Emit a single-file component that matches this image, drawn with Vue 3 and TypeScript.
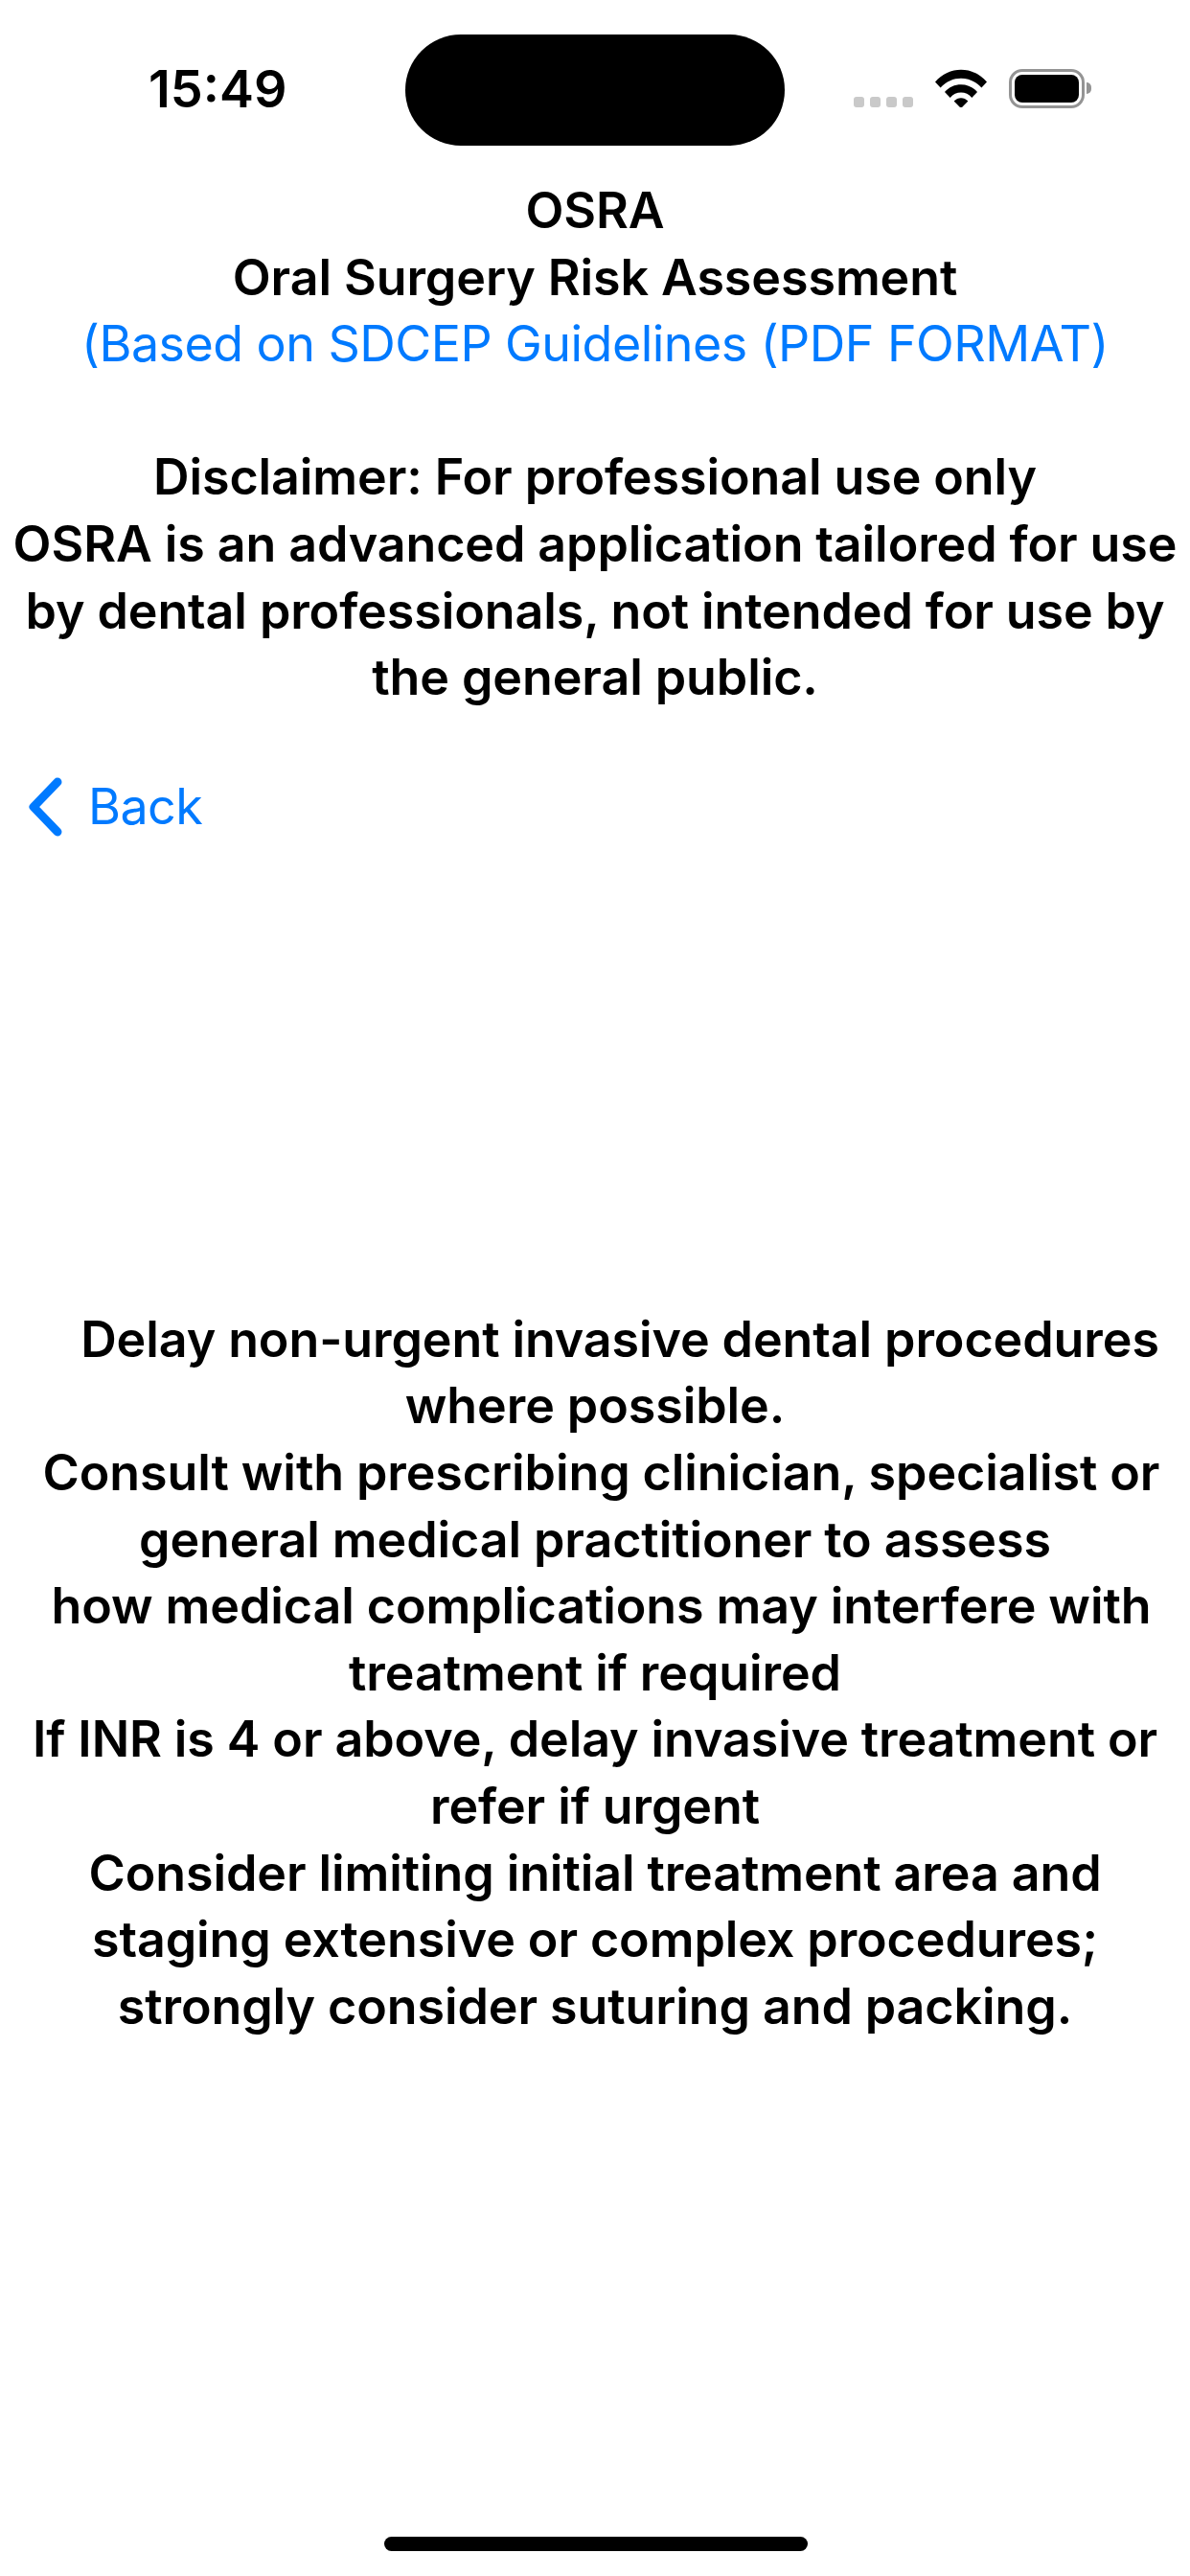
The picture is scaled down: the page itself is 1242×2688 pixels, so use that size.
<script setup lang="ts">
const header: string[] = ['OSRA', 'Oral Surgery Risk Assessment']
const disclaimer: string[] = [
  'Disclaimer: For professional use only',
  'OSRA is an advanced application tailored for use',
  'by dental professionals, not intended for use by',
  'the general public.',
]
const advice: string[] = [
  '    Delay non-urgent invasive dental procedures',
  'where possible.',
  ' Consult with prescribing clinician, specialist or',
  'general medical practitioner to assess',
  ' how medical complications may interfere with',
  'treatment if required',
  'If INR is 4 or above, delay invasive treatment or',
  'refer if urgent',
  'Consider limiting initial treatment area and',
  'staging extensive or complex procedures;',
  'strongly consider suturing and packing.',
]
</script>

<template>
  <div class="screen">
    <header class="status">
      <span class="time">15:49</span>
      <div class="island"></div>
      <div class="indicators">
        <div class="dots"><i></i><i></i><i></i><i></i></div>
        <svg class="wifi" viewBox="0 0 54 40" width="54" height="40">
          <path d="M0 13.5 C14.5 -3.5 39.5 -3.5 54 13.5 L48.4 19.4 C36.5 6.5 17.5 6.5 5.6 19.4 Z" />
          <path d="M10 24 C18.5 13.5 35.5 13.5 44 24 L38.3 30 C32.5 22.8 21.5 22.8 15.7 30 Z" />
          <path d="M19.6 33.6 C24 29 30 29 34.4 33.6 L27 41 Z" />
        </svg>
        <div class="battery"><div class="level"></div></div>
        <div class="cap"></div>
      </div>
    </header>

    <main class="content">
      <section class="copy">
        <div v-for="line in header" :key="line" class="line">{{ line }}</div>
        <a class="line link">(Based on SDCEP Guidelines (PDF FORMAT)</a>
      </section>
      <section class="copy disclaimer">
        <div v-for="line in disclaimer" :key="line" class="line">{{ line }}</div>
      </section>
      <a class="back">
        <svg viewBox="0 0 40 62" width="40" height="62">
          <path d="M34 5 L9 31 L34 57" />
        </svg>
        <span>Back</span>
      </a>
      <section class="copy advice">
        <div v-for="line in advice" :key="line" class="line">{{ line }}</div>
      </section>
    </main>

    <div class="home"></div>
  </div>
</template>

<style>
html, body { margin: 0; background: #fff; }
</style>

<style scoped>
.screen {
  width: 1242px;
  height: 2688px;
  background: #fff;
  color: #000;
  font-family: Inter, "Liberation Sans", sans-serif;
  display: flex;
  flex-direction: column;
  overflow: hidden;
}
.status {
  height: 185px;
  flex: none;
  display: grid;
  grid-template-columns: 423px 396px 423px;
  position: relative;
}
.time {
  font-size: 54px;
  font-weight: 600;
  line-height: 62px;
  margin: 62px 0 0 155px;
}
.island {
  width: 396px;
  height: 116px;
  margin-top: 36px;
  border-radius: 58px;
  background: #000;
}
.indicators {
  display: flex;
  align-items: flex-start;
  position: relative;
}
.dots {
  display: flex;
  gap: 6px;
  margin: 101px 0 0 72px;
}
.dots i {
  display: block;
  width: 11px;
  height: 11px;
  border-radius: 3px;
  background: #c9c9c9;
}
.wifi {
  margin: 72px 0 0 23px;
  fill: #000;
}
.battery {
  width: 79px;
  height: 41px;
  margin: 72px 0 0 23px;
  box-sizing: border-box;
  border: 3px solid #949494;
  border-radius: 14px;
  padding: 3px;
}
.level {
  height: 100%;
  border-radius: 8px;
  background: #000;
}
.cap {
  width: 5px;
  height: 12px;
  margin: 86px 0 0 2px;
  background: #949494;
  border-radius: 0 6px 6px 0;
}
.content {
  flex: 1;
  display: flex;
  flex-direction: column;
}
.copy {
  text-align: center;
  font-size: 52px;
  font-weight: 600;
  letter-spacing: -0.1px;
  line-height: 69.6px;
}
.line {
  white-space: pre;
}
.link {
  display: block;
  color: #007aff;
  font-weight: 400;
  letter-spacing: -0.55px;
}
.disclaimer {
  margin-top: 69.6px;
}
.back {
  display: flex;
  align-items: center;
  height: 70px;
  margin: 65px 0 0 26px;
  color: #007aff;
  font-size: 52px;
  letter-spacing: -0.55px;
  line-height: 70px;
}
.back svg {
  fill: none;
  stroke: #007aff;
  stroke-width: 9;
  stroke-linecap: round;
  stroke-linejoin: round;
  margin-right: 26px;
}
.advice {
  margin-top: 486px;
}
.home {
  position: absolute;
  left: 401px;
  top: 2647px;
  width: 442px;
  height: 15px;
  border-radius: 8px;
  background: #000;
}
</style>
